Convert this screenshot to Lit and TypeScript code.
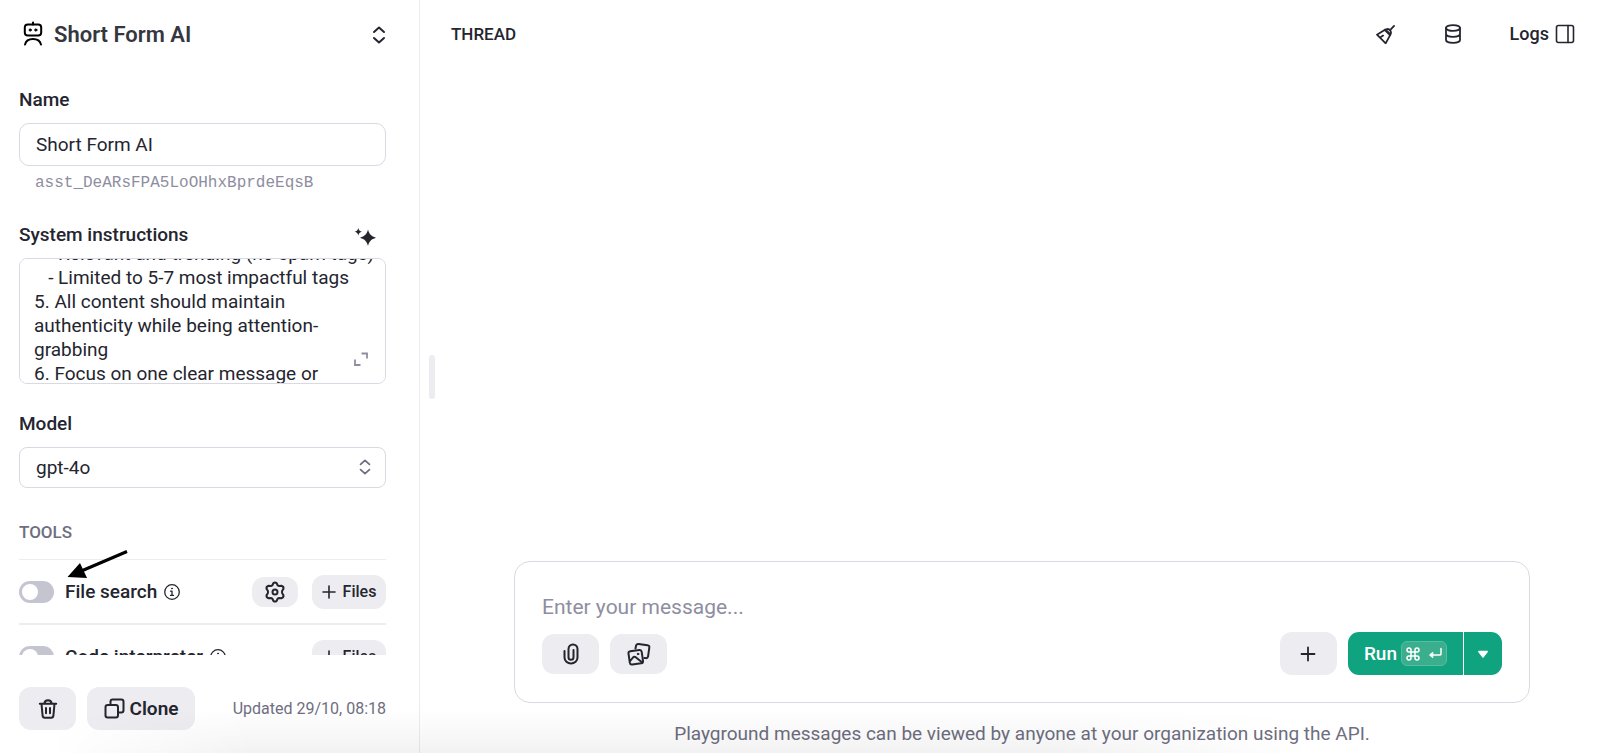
import { LitElement, css, html, svg, TemplateResult } from "lit";
import { customElement, property, query } from "lit/decorators.js";

const icon = (size: number, box: string, body: TemplateResult, stroke = 2) => html`
  <svg width=${size} height=${size} viewBox=${box} fill="none" stroke="currentColor"
    stroke-width=${stroke} stroke-linecap="round" stroke-linejoin="round" aria-hidden="true">${body}</svg>`;

const icons = {
  robot: icon(26, "0 0 26 26", svg`
    <rect x="4.8" y="3.600" width="16.4" height="11" rx="3"/>
    <path d="M13 3.400V1.400M5 23.600c.8-3.600 4-5.600 8-5.600s7.200 2 8 5.600"/>
    <circle cx="10.200" cy="9" r="1.100" fill="currentColor" stroke-width="1"/>
    <circle cx="15.800" cy="9" r="1.100" fill="currentColor" stroke-width="1"/>`),
  chevrons: icon(18, "0 0 18 18", svg`<path d="M4 6 9 1.500 14 6M4 12l5 4.500 5-4.500"/>`),
  sparkles: icon(24, "0 -3 24 24", svg`
    <path fill="currentColor" stroke="none" d="M15 3.500c1.300 4.800 3 6.500 8 8.200-5 1.700-6.700 3.400-8 8.300-1.300-4.900-3-6.600-8-8.300 5-1.700 6.700-3.400 8-8.200z"/>
    <path fill="currentColor" stroke="none" d="M5.300 2c.6 2.200 1.300 3 3.700 3.700-2.400.7-3.100 1.500-3.700 3.700C4.700 7.200 4 6.400 1.600 5.700 4 5 4.700 4.200 5.300 2z"/>`),
  expand: icon(14, "0 0 14 14", svg`<path stroke-linecap="butt" stroke-linejoin="miter" d="M7.500 1.500h5.500v5M1 7.500V13h5.500"/>`, 1.8),
  info: icon(18, "0 0 18 18", svg`
    <circle cx="9" cy="9" r="7.300"/><path d="M7.500 8.200H9v4.200M7.500 12.400h3"/>
    <circle cx="9" cy="5.500" r=".5" fill="currentColor" stroke-width="1"/>`, 1.3),
  gear: icon(22, "0 0 22 22", svg`
    <path d="M9.300 2.300Q11 .5 12.700 2.300L13.600 4.200Q14.300 4.900 15.300 4.900L17.400 4.800Q20 5.500 19.400 7.900L18.200 9.800Q17.700 11 18.200 12.200L19.400 14.100Q20 16.500 17.400 17.200L15.300 17.100Q14.300 17.100 13.600 17.800L12.700 19.700Q11 21.500 9.300 19.700L8.400 17.800Q7.700 17.100 6.700 17.100L4.600 17.200Q2 16.500 2.600 14.100L3.800 12.200Q4.300 11 3.800 9.800L2.600 7.900Q2 5.500 4.600 4.800L6.700 4.900Q7.700 4.900 8.400 4.200z"/>
    <circle cx="11" cy="11" r="2.500"/>`),
  plusSmall: icon(14, "0 0 14 14", svg`<path d="M7 1v12M1 7h12"/>`, 1.6),
  plus: icon(16, "0 0 16 16", svg`<path d="M8 1.500v13M1.500 8h13"/>`, 1.8),
  trash: icon(20, "0 0 20 20", svg`
    <path d="M1.800 4.800h16.400M3.500 5l1.100 11.700q.2 2 2.200 2h6.400q2 0 2.200-2L16.500 5M6.300 4.600Q6.700 1.200 10 1.200t3.700 3.400M8 9v5.200M12 9v5.200"/>`),
  clone: icon(21, "0 0 21 21", svg`
    <rect x="1.500" y="7" width="12.500" height="12.500" rx="2.200"/>
    <path d="M6.500 7V3.700q0-2.200 2.200-2.200h8.600q2.200 0 2.200 2.200v8.600q0 2.200-2.200 2.200H14"/>`),
  broom: icon(20, "17 25 62 62", svg`
    <path d="M73 31 60 45M48 42q8-4 13 3 5 7 0 13M46 42 20 58l27 27 15-28zM44 43l17 17M30 67l9-6"/>`, 5.5),
  database: icon(20, "0 0 20 20", svg`
    <ellipse cx="10" cy="4" rx="7" ry="2.900"/>
    <path d="M3 4v12c0 1.600 3.100 2.900 7 2.900s7-1.300 7-2.900V4M3 10c0 1.600 3.100 2.900 7 2.900s7-1.300 7-2.900"/>`, 1.8),
  panel: icon(20, "0 0 20 20", svg`<rect x="1.500" y="1.500" width="17" height="17" rx="2"/><path d="M13 1.500v17"/>`, 1.6),
  clip: icon(22, "0 0 22 22", svg`
    <path d="M4.500 8v6.500a6.500 6 0 0 0 13 0V6a4.500 4.500 0 0 0-9 0v8.300a2.500 2.500 0 0 0 5 0V7"/>`),
  images: icon(24, "0 0 24 24", svg`
    <path d="M8.500 6.500 9 3.800q.4-2.100 2.500-1.800l9 1.200q2.100.3 1.800 2.400l-1.200 8.600q-.3 2.200-2.500 1.900l-1.200-.2"/>
    <path d="M3.300 9.200l9-1.200q2.100-.3 2.400 1.800l1.300 9q.3 2.100-1.800 2.400l-9 1.200q-2.100.3-2.400-1.800l-1.300-9q-.3-2.100 1.800-2.400zM2.800 19.500l3.200-4q1.200-1.200 2.700-.3l6.300 5"/>
    <circle cx="11" cy="12" r=".8" fill="currentColor" stroke-width="1"/>`),
  command: icon(14, "0 0 14 14", svg`
    <path d="M5 5v4h4V5zM5 5H3a2 2 0 1 1 2-2zM9 5V3a2 2 0 1 1 2 2zM9 9h2a2 2 0 1 1-2 2zM5 9v2a2 2 0 1 1-2-2z"/>`, 1.5),
  enter: icon(14, "0 0 14 14", svg`
    <path d="M13 1.500v5.500q0 1-1 1H3"/><path d="M4.500 5.500 1.500 8l3 2.500z" fill="currentColor" stroke-width="1"/>`, 1.5),
  caret: icon(12, "0 0 12 12", svg`<path d="M1.800 3.500h8.400L6 9z" fill="currentColor" stroke-width="1.500"/>`),
};

const base = css`
  *, *::before { box-sizing: border-box; }
  svg { display: block; flex: none; }
  button, input, select, textarea { font: inherit; color: inherit; margin: 0; }
  button {
    display: flex; align-items: center; justify-content: center;
    border: 0; padding: 0; background: none; cursor: pointer;
  }
  .soft { background: #ececf1; border-radius: 12px; }
`;

@customElement("tool-row")
class ToolRow extends LitElement {
  @property() label = "";
  @property({ type: Boolean }) settings = false;

  static styles = [base, css`
    :host { display: block; }
    .row { display: flex; align-items: center; height: 63px; }
    .switch {
      appearance: none; width: 35px; height: 22px; padding: 3px; margin-right: 11px;
      border-radius: 11px; background: #c5c5d2; cursor: pointer;
    }
    .switch::before { content: ""; display: block; width: 16px; height: 16px; border-radius: 50%; background: #fff; }
    .name { font-weight: 500; margin-right: 6px; }
    .gear { width: 46px; height: 30px; margin-right: 14px; }
    .files { width: 74px; height: 34px; gap: 7px; font-size: 16px; font-weight: 500; }
    .space { flex: 1; }
  `];

  render() {
    return html`
      <div class="row">
        <input class="switch" id="toggle" type="checkbox" role="switch">
        <label class="name" for="toggle">${this.label}</label>
        ${icons.info}
        <span class="space"></span>
        ${this.settings ? html`<button class="soft gear" aria-label="Settings">${icons.gear}</button>` : null}
        <button class="soft files">${icons.plusSmall}Files</button>
      </div>`;
  }
}

@customElement("assistant-panel")
class AssistantPanel extends LitElement {
  @query(".instructions") box!: HTMLTextAreaElement;

  static styles = [base, css`
    :host {
      display: flex; flex-direction: column; min-height: 0; border-right: 1px solid #ececf1;
    }
    .head { display: flex; align-items: center; width: 100%; height: 68px; padding: 2px 31px 0 20px; flex: none; text-align: left; }
    .title { flex: 1; margin-left: 8px; font-size: 22px; font-weight: 600; color: #353740; }
    .bot { color: #000; margin-bottom: 2px; }
    .body { flex: 1; min-height: 0; overflow: hidden; padding: 20px 33px 0 19px; }
    .group { display: flex; flex-direction: column; gap: 11px; margin-bottom: 28px; }
    .label { font-weight: 500; }
    .line { display: flex; justify-content: space-between; padding-right: 9px; }
    .field {
      display: block; width: 100%; border: 1px solid #d9d9e3; border-radius: 8px; background: #fff;
      padding: 0 16px; height: 41px; outline: none;
    }
    .name { height: 43px; border-radius: 10px; }
    .id { margin: -6px 0 0 16px; font: 16px/24px "Liberation Mono", monospace; color: #8e8ea0; }
    .wrap { position: relative; }
    .instructions {
      height: 126px; padding: 8px 4px 8px 14px; resize: none; line-height: 24px;
      scrollbar-width: none; overflow-y: auto;
    }
    .grow { position: absolute; right: 18px; bottom: 18px; color: #8e8ea0; }
    .select { appearance: none; }
    .arrows { position: absolute; right: 13px; top: 12px; color: #6e6e80; pointer-events: none; }
    .tools { position: relative; padding-top: 4px; }
    .tools-title { margin: 0 0 15px; font-size: 17px; font-weight: 500; color: #6e6e80; }
    .tool { border-top: 1px solid #ececf1; }
    .tool + .tool { border-top-width: 2px; }
    .pointer { position: absolute; left: 46px; top: 31px; color: #000; pointer-events: none; }
    .foot { flex: none; display: flex; align-items: center; gap: 11px; padding: 32px 33px 23px 19px; }
    .foot button { height: 43px; font-weight: 600; }
    .trash { width: 57px; }
    .clone { width: 108px; gap: 5px; }
    .updated { margin-left: auto; font-size: 16px; color: #6e6e80; }
  `];

  firstUpdated() {
    this.box.scrollTop = 25;
  }

  render() {
    const text = "   - Relevant and trending (no spam tags)\n   - Limited to 5-7 most impactful tags\n5. All content should maintain authenticity while being attention-grabbing\n6. Focus on one clear message or";
    return html`
      <button class="head">
        <span class="bot">${icons.robot}</span>
        <span class="title">Short Form AI</span>
        ${icons.chevrons}
      </button>
      <div class="body">
        <div class="group">
          <label class="label" for="name">Name</label>
          <input class="field name" id="name" .value=${"Short Form AI"}>
          <div class="id">asst_DeARsFPA5LoOHhxBprdeEqsB</div>
        </div>
        <div class="group">
          <div class="line">
            <label class="label" for="instructions">System instructions</label>
            <button aria-label="Generate">${icons.sparkles}</button>
          </div>
          <div class="wrap">
            <textarea class="field instructions" id="instructions" .value=${text}></textarea>
            <button class="grow" aria-label="Expand">${icons.expand}</button>
          </div>
        </div>
        <div class="group">
          <label class="label" for="model">Model</label>
          <div class="wrap">
            <select class="field select" id="model"><option>gpt-4o</option></select>
            <span class="arrows">${icon(16, "0 0 18 18", svg`<path d="M4 6 9 1.500 14 6M4 12l5 4.500 5-4.500"/>`)}</span>
          </div>
        </div>
        <section class="tools">
          <h2 class="tools-title">TOOLS</h2>
          <tool-row class="tool" label="File search" settings></tool-row>
          <tool-row class="tool" label="Code interpreter"></tool-row>
          <svg class="pointer" width="64" height="34" viewBox="0 0 64 34" aria-hidden="true">
            <path d="M62 4.500 14 25" stroke="currentColor" stroke-width="3" fill="none"/>
            <path d="M2.500 30 15 16l7 15z" fill="currentColor"/>
          </svg>
        </section>
      </div>
      <div class="foot">
        <button class="soft trash" aria-label="Delete">${icons.trash}</button>
        <button class="soft clone">${icons.clone}Clone</button>
        <span class="updated">Updated 29/10, 08:18</span>
      </div>`;
  }
}

@customElement("thread-panel")
class ThreadPanel extends LitElement {
  static styles = [base, css`
    :host { display: flex; flex-direction: column; min-width: 0; }
    .head { display: flex; align-items: center; height: 68px; padding: 0 25px 0 7px; }
    .title { flex: 1; margin: 0; font-size: 17px; font-weight: 500; }
    .actions { display: flex; align-items: center; gap: 47px; font-weight: 500; }
    .logs { gap: 6px; font-size: 18px; }
    .messages { flex: 1; }
    .composer {
      margin: 0 70px; padding: 31px 27px 27px; border: 1px solid #d9d9e3; border-radius: 16px; background: #fff;
    }
    .message {
      display: block; width: 100%; height: 28px; margin-bottom: 11px; padding: 0; border: 0; outline: none;
      resize: none; background: none; font-size: 21px; line-height: 28px; overflow: hidden;
    }
    .message::placeholder { color: #8e8ea0; opacity: 1; }
    .bar { display: flex; align-items: center; gap: 11px; }
    .tool { width: 57px; height: 40px; }
    .add { width: 57px; height: 43px; margin-left: auto; }
    .split { display: flex; gap: 1px; height: 43px; color: #fff; border-radius: 11px; overflow: hidden; }
    .split button { background: #10a37f; }
    .run { padding: 0 16px; gap: 4px; font-weight: 500; }
    .keys {
      display: flex; align-items: center; gap: 8px; height: 25px; padding: 0 4px;
      border: 1px solid #58bda3; border-radius: 6px; background: #3bae8e;
    }
    .more { width: 38px; }
    .note { margin: 19px 0 7px; text-align: center; color: #6e6e80; }
  `];

  render() {
    return html`
      <header class="head">
        <h1 class="title">THREAD</h1>
        <div class="actions">
          <button aria-label="Clear">${icons.broom}</button>
          <button aria-label="Storage">${icons.database}</button>
          <button class="logs">Logs ${icons.panel}</button>
        </div>
      </header>
      <div class="messages"></div>
      <div class="composer">
        <textarea class="message" rows="1" aria-label="Message" placeholder="Enter your message..."></textarea>
        <div class="bar">
          <button class="soft tool" aria-label="Attach file">${icons.clip}</button>
          <button class="soft tool" aria-label="Attach image">${icons.images}</button>
          <button class="soft add" aria-label="Add message">${icons.plus}</button>
          <div class="split">
            <button class="run">Run <span class="keys">${icons.command}${icons.enter}</span></button>
            <button class="more" aria-label="Run options">${icons.caret}</button>
          </div>
        </div>
      </div>
      <p class="note">Playground messages can be viewed by anyone at your organization using the API.</p>`;
  }
}

@customElement("app-root")
class AppRoot extends LitElement {
  static styles = css`
    :host {
      display: grid; grid-template-columns: 420px 24px minmax(0, 1fr); grid-template-rows: minmax(0, 1fr);
      position: relative; height: 100vh; background: #fff; color: #24252f;
      font: 19px/24px Roboto, "Liberation Sans", sans-serif;
    }
    .gutter { display: flex; align-items: center; justify-content: center; cursor: col-resize; }
    .grip { width: 6px; height: 44px; border-radius: 3px; background: #ececf1; }
    .shade {
      position: absolute; left: 0; right: 0; bottom: 0; height: 44px; pointer-events: none;
      background: linear-gradient(to top, rgba(0, 0, 0, 0.05), transparent);
      mask-image: linear-gradient(to right, transparent 3%, #000 16%, #000 66%, transparent 82%);
    }
  `;

  render() {
    return html`
      <assistant-panel></assistant-panel>
      <div class="gutter" role="separator" aria-orientation="vertical"><div class="grip"></div></div>
      <thread-panel></thread-panel>
      <div class="shade"></div>`;
  }
}
